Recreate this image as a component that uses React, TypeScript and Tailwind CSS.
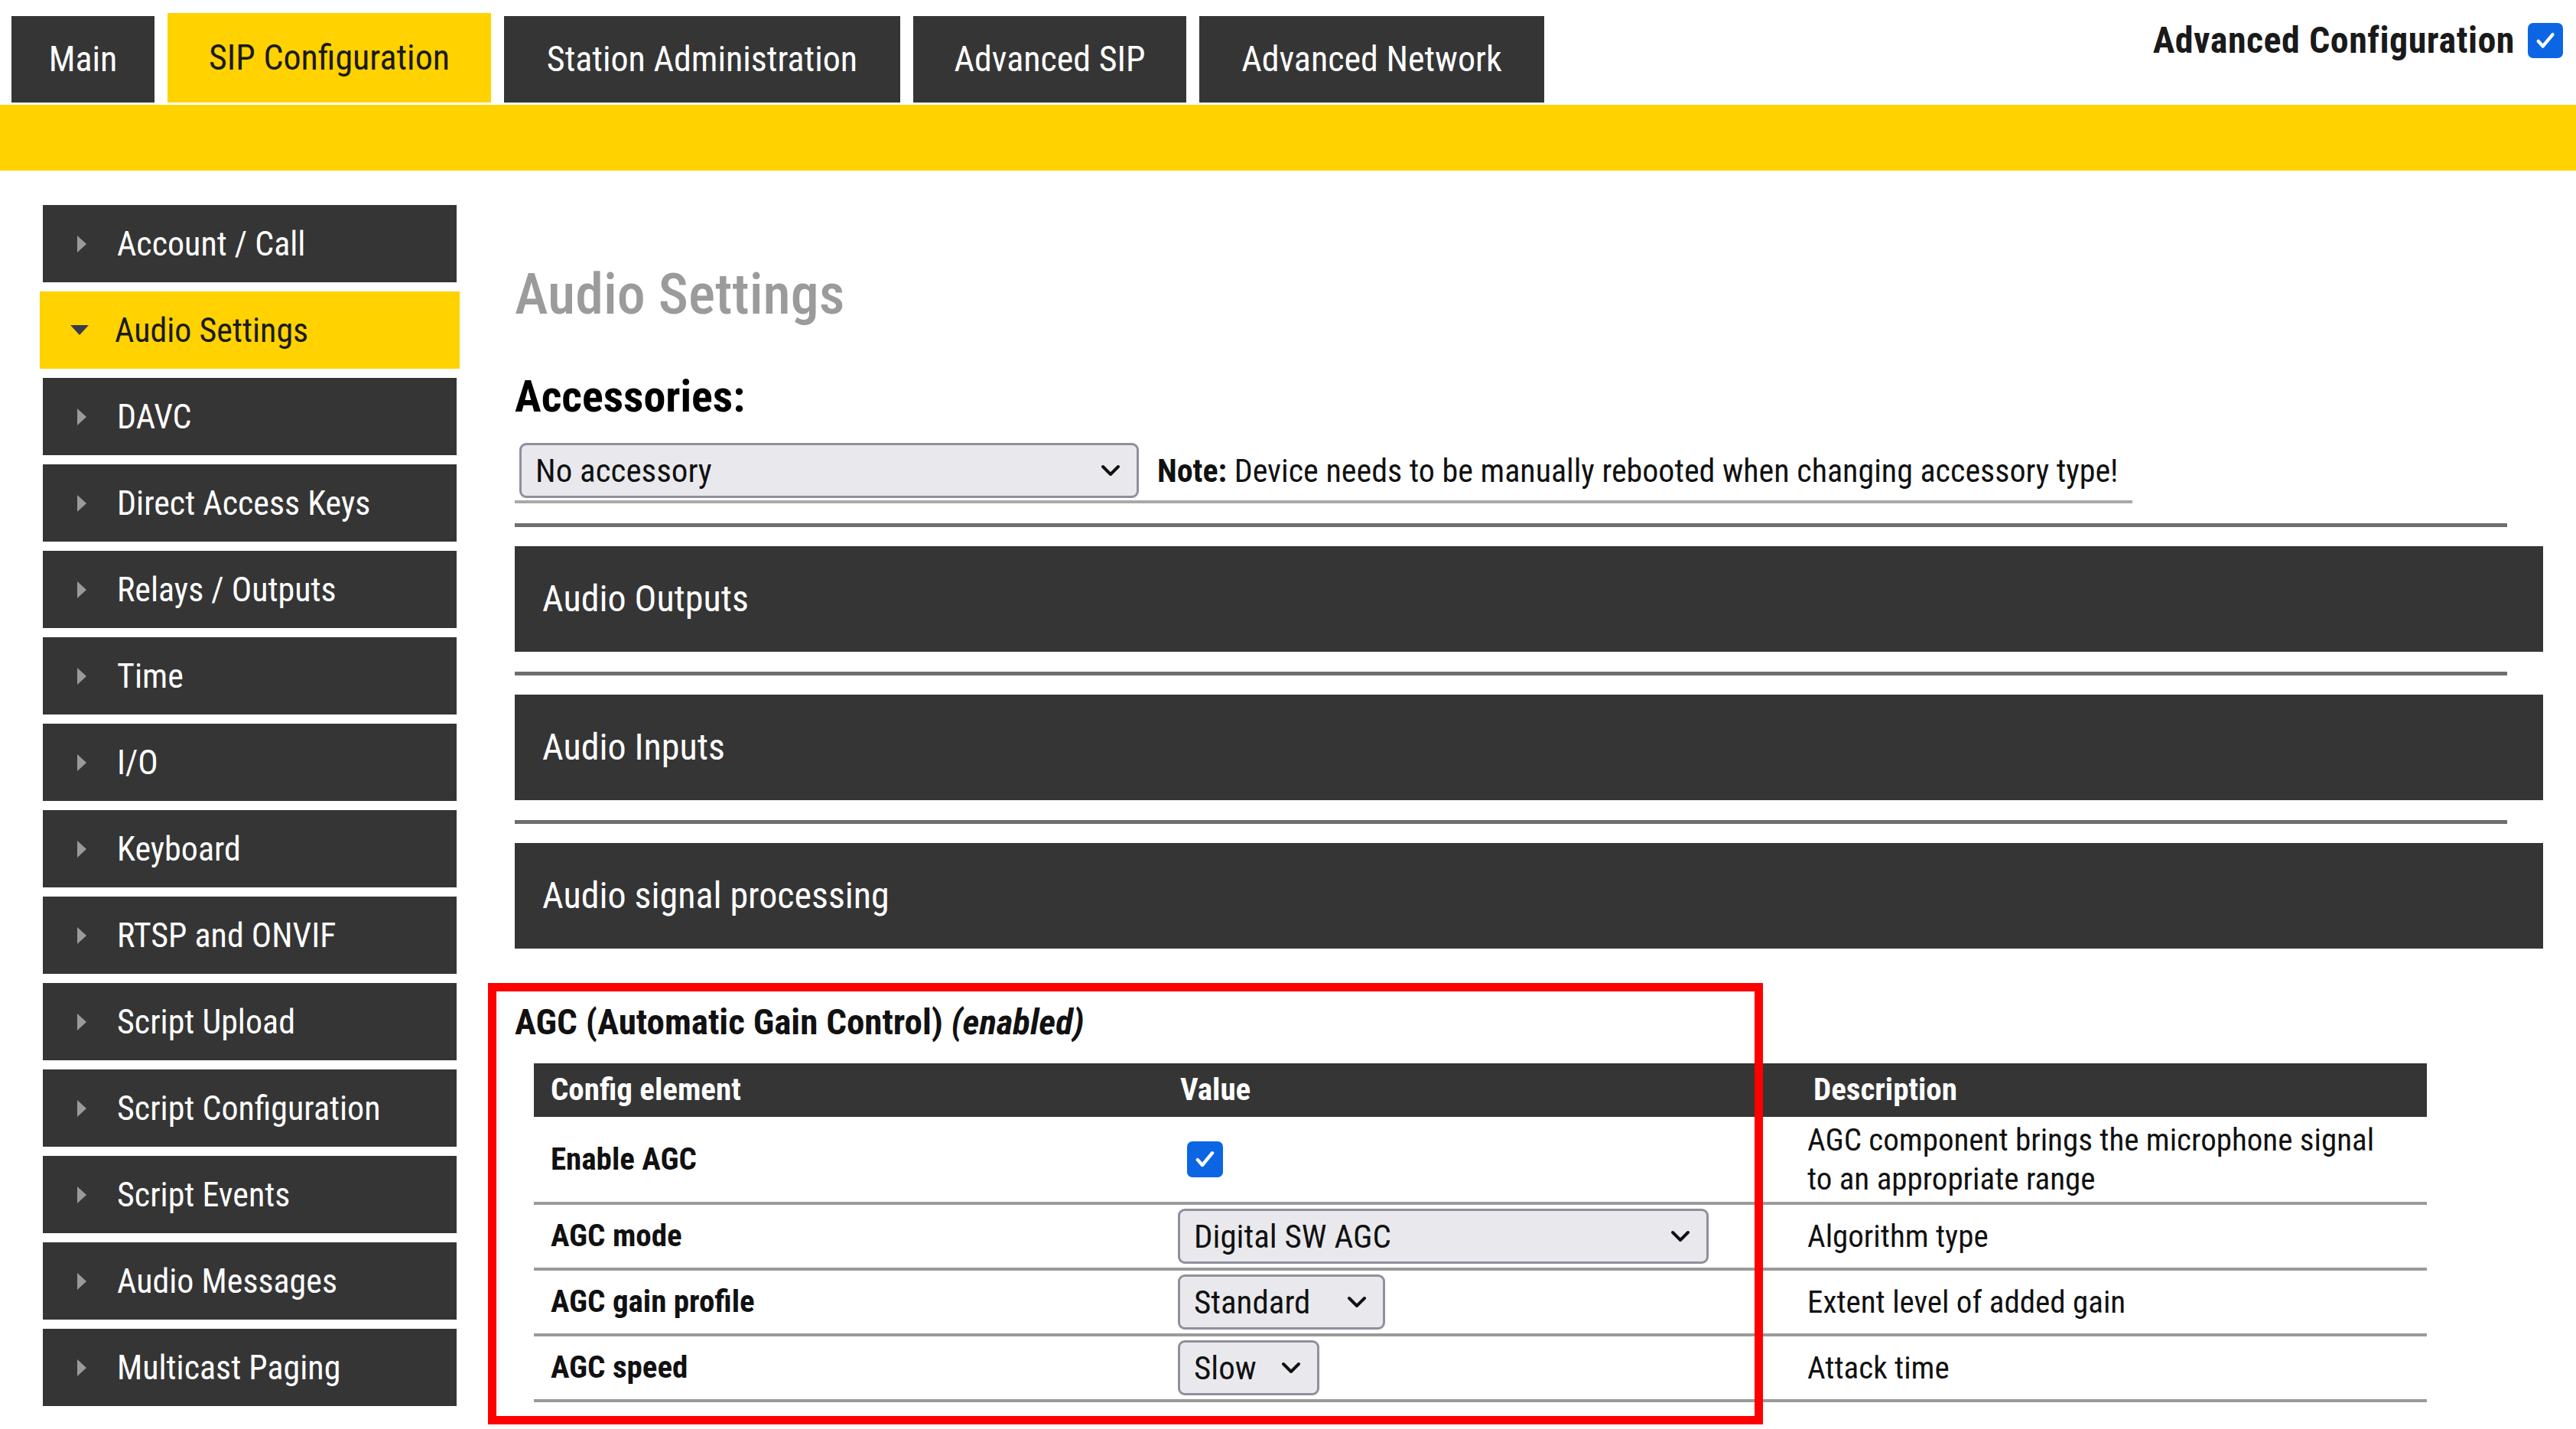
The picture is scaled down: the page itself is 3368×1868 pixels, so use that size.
import { ChevronDown } from 'lucide-react'

const tabs = [
  { label: 'Main', w: 'w-[187px]' },
  { label: 'SIP Configuration', w: 'w-[423px]', active: true },
  { label: 'Station Administration', w: 'w-[518px]' },
  { label: 'Advanced SIP', w: 'w-[357px]' },
  { label: 'Advanced Network', w: 'w-[451px]' },
]

const menu = [
  'Account / Call',
  'Audio Settings',
  'DAVC',
  'Direct Access Keys',
  'Relays / Outputs',
  'Time',
  'I/O',
  'Keyboard',
  'RTSP and ONVIF',
  'Script Upload',
  'Script Configuration',
  'Script Events',
  'Audio Messages',
  'Multicast Paging',
]

const font = "font-['Roboto_Condensed',Roboto,'Liberation_Sans',sans-serif]"

function Check({ size }: { size: string }) {
  return (
    <span className={`${size} flex items-center justify-center rounded-[7px] bg-[#0c66e4]`}>
      <svg viewBox="0 0 24 24" className="h-[70%] w-[70%]" fill="none" stroke="white" strokeWidth={3.2} strokeLinecap="round" strokeLinejoin="round">
        <path d="M5 12.5l4.5 5L19 6" />
      </svg>
    </span>
  )
}

function Select({ value, w }: { value: string; w: string }) {
  return (
    <div className={`${w} flex h-[72px] items-center justify-between rounded-[9px] border-[3px] border-[#8f8f9d] bg-[#e9e9ed] pl-[18px] pr-[14px] text-[43px] text-[#111]`}>
      <span>{value}</span>
      <ChevronDown className="h-[40px] w-[40px] shrink-0" strokeWidth={2.4} />
    </div>
  )
}

function Section({ title }: { title: string }) {
  return (
    <>
      <div className="mt-[26px] h-[5px] w-[2605px] bg-[#6e6e6e]" />
      <div className="mt-[25px] flex h-[138px] items-center bg-[#353535] pl-[36px] text-[48px] text-white">{title}</div>
    </>
  )
}

const rows = [
  { name: 'Enable AGC', desc: ['AGC component brings the microphone signal', 'to an appropriate range'] },
  { name: 'AGC mode', select: 'Digital SW AGC', w: 'w-[694px]', desc: ['Algorithm type'] },
  { name: 'AGC gain profile', select: 'Standard', w: 'w-[271px]', desc: ['Extent level of added gain'] },
  { name: 'AGC speed', select: 'Slow', w: 'w-[185px]', desc: ['Attack time'] },
]

export default function App() {
  return (
    <div className={`relative h-[1868px] w-[3368px] overflow-hidden bg-white ${font}`}>
      <div className="flex h-[134px] items-end gap-[17px] pl-[15px]">
        {tabs.map((t) => (
          <div
            key={t.label}
            className={`${t.w} flex items-center justify-center text-[46px] ${
              t.active ? 'h-[117px] bg-[#ffd200] text-[#1a1a1a]' : 'h-[113px] bg-[#353535] text-white'
            }`}
          >
            {t.label}
          </div>
        ))}
        <div className="ml-auto mr-[17px] flex items-center gap-[17px] self-start pt-[17px]">
          <span className="text-[48px] font-bold tracking-[0.5px] text-[#1a1a1a]">Advanced Configuration</span>
          <Check size="h-[46px] w-[46px]" />
        </div>
      </div>
      <div className="mt-[3px] h-[86px] bg-[#ffd200]" />

      <div className="flex pt-[45px]">
        <div className="ml-[56px] flex w-[541px] flex-col gap-[12px]">
          {menu.map((m) =>
            m === 'Audio Settings' ? (
              <div key={m} className="-mx-[4px] flex h-[101px] items-center bg-[#ffd200] pl-[40px] text-[44px] text-[#1a1a1a]">
                <span className="mr-[34px] h-0 w-0 border-x-[12px] border-t-[13px] border-x-transparent border-t-[#3a3a4a]" />
                {m}
              </div>
            ) : (
              <div key={m} className="flex h-[101px] items-center bg-[#353535] pl-[45px] text-[44px] text-white">
                <span className="mr-[40px] h-0 w-0 border-y-[11px] border-l-[12px] border-y-transparent border-l-[#9a9a9a]" />
                {m}
              </div>
            ),
          )}
        </div>

        <div className="ml-[76px] flex w-[2652px] flex-col">
          <h1 className="mt-[70px] text-[74px] font-medium leading-[94px] text-[#9b9b9b]">Audio Settings</h1>
          <h2 className="mt-[51px] text-[58px] font-bold leading-[70px] text-black">Accessories:</h2>
          <div className="mt-[26px] flex w-[2115px] items-center gap-[24px] border-b-[4px] border-[#a9a9a9] pb-[3px] pl-[6px]">
            <Select value="No accessory" w="w-[810px]" />
            <span className="text-[42px] text-[#111]">
              <b>Note:</b> Device needs to be manually rebooted when changing accessory type!
            </span>
          </div>
          <Section title="Audio Outputs" />
          <Section title="Audio Inputs" />
          <Section title="Audio signal processing" />

          <div className="mt-[66px] text-[47px] font-bold leading-[60px] text-[#111]">
            AGC (Automatic Gain Control) <i>(enabled)</i>
          </div>
          <div className="ml-[25px] mt-[24px] w-[2475px] text-[41px] text-[#111]">
            <div className="grid h-[70px] grid-cols-[822px_843px_1fr] items-center bg-[#353535] font-bold text-white">
              <span className="pl-[22px]">Config element</span>
              <span className="pl-[23px]">Value</span>
              <span className="pl-[8px]">Description</span>
            </div>
            {rows.map((r) => (
              <div
                key={r.name}
                className={`grid grid-cols-[822px_843px_1fr] items-center border-b-[4px] border-[#9a9a9a] ${
                  r.select ? 'h-[86px]' : 'h-[115px]'
                }`}
              >
                <span className="pl-[22px] font-bold">{r.name}</span>
                <span className="pl-[20px]">
                  {r.select ? <Select value={r.select} w={r.w!} /> : <span className="ml-[12px] block"><Check size="h-[47px] w-[47px]" /></span>}
                </span>
                <span className="leading-[51px]">
                  {r.desc.map((d) => (
                    <div key={d}>{d}</div>
                  ))}
                </span>
              </div>
            ))}
          </div>
        </div>
      </div>

      <div className="pointer-events-none absolute left-[638px] top-[1285px] h-[577px] w-[1667px] border-[11px] border-[#ff0000]" />
    </div>
  )
}
